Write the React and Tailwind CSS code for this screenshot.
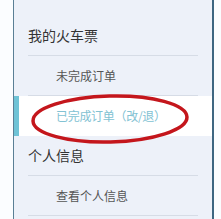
import React from "react";

const font = { fontFamily: '"Noto Sans CJK SC", "Liberation Sans", sans-serif' };

function Heading({ children }) {
  return (
    <div className="mx-[14px] h-10 flex items-center border-b border-[#d6dce6] text-[14px] text-[#333]">
      {children}
    </div>
  );
}

function Item({ children, active }) {
  if (active) {
    return (
      <div className="relative h-10 flex items-center bg-white border-l-[5px] border-[#6fc3d6] pl-[37px] text-[12px] tracking-[-0.3px] text-[#82c2d3]">
        {children}
      </div>
    );
  }
  return (
    <div className="mx-[14px] h-10 flex items-center border-b border-[#d6dce6] pl-[28px] text-[12px] text-[#555]">
      {children}
    </div>
  );
}

export default function App() {
  return (
    <div className="w-[221px] h-[219px] bg-[#fbfdff] overflow-hidden" style={font}>
      <div className="relative ml-[13px] w-[201px] h-full bg-[#edf1f9] border-l border-[#5a7f95] border-r-2 border-r-[#3e6782] pt-4">
        <Heading>我的火车票</Heading>
        <Item>未完成订单</Item>
        <Item active>已完成订单（改/退）</Item>
        <Heading>个人信息</Heading>
        <Item>查看个人信息</Item>

        <svg
          className="absolute left-[15px] top-[92px] pointer-events-none"
          width="162"
          height="54"
          viewBox="0 0 162 54"
        >
          <ellipse
            cx="81"
            cy="27"
            rx="77"
            ry="23"
            fill="none"
            stroke="#c4161c"
            strokeWidth="3.5"
            transform="rotate(-1.5 81 27)"
          />
        </svg>
      </div>
    </div>
  );
}
